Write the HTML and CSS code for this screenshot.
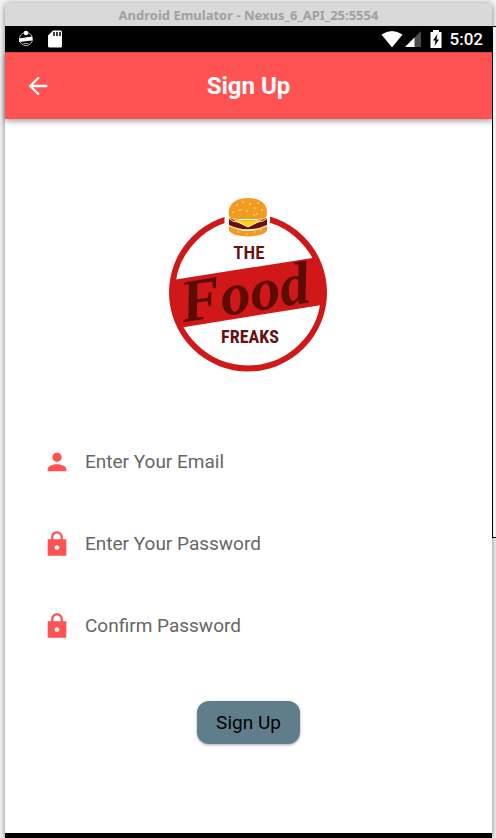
FILE: index.html
```html
<!DOCTYPE html>
<html lang="en">
<head>
<meta charset="utf-8">
<title>Sign Up</title>
<meta name="viewport" content="width=device-width, initial-scale=1">
<link rel="stylesheet" href="styles.css">
</head>
<body>
<div class="desktop">
  <div class="window">
    <div class="titlebar">Android Emulator - Nexus_6_API_25:5554</div>
    <div class="statusbar">
      <svg class="status-icon" width="16" height="18" viewBox="0 0 16 18" aria-hidden="true">
        <circle cx="8" cy="9" r="6.5" fill="none" stroke="#bbb" stroke-width="1"/>
        <path d="M1 8.500l13-2v4l-13 1.500z" fill="#fff"/>
        <circle cx="8" cy="3" r="2.300" fill="#fff"/>
        <path d="M5.500 13.500h5" stroke="#999"/>
      </svg>
      <svg class="status-icon" width="14" height="18" viewBox="0 0 14 18" aria-hidden="true">
        <path d="M5 .5h7.500a1.500 1.500 0 0 1 1.500 1.500v14a1.500 1.500 0 0 1-1.500 1.500h-11A1.500 1.500 0 0 1 0 16V5.500z" fill="#fff"/>
        <path d="M6 2v4M9 2v4M12 2v4" stroke="#000" stroke-width="1.500"/>
      </svg>
      <span class="spacer"></span>
      <svg width="42" height="18" viewBox="0 0 42 18" aria-hidden="true">
        <path d="M.5 4.500Q11 -2.500 21.500 4.500L11 17.500z" fill="#fff"/>
        <path d="M24 17L40 1v16z" fill="#4c4c4c"/>
        <path d="M24 17L33.500 7.500V17z" fill="#fff"/>
      </svg>
      <svg class="battery" width="12" height="18" viewBox="0 0 12 18" aria-hidden="true">
        <path d="M.5 2H3V0h6v2h2.500v16H.5z" fill="#fff"/>
        <path d="M7.500 4L3 10.500h2.500L4.500 16 9 9.500H6.500z" fill="#000"/>
      </svg>
      <span class="clock">5:02</span>
    </div>
    <header class="appbar">
      <button class="back" type="button" aria-label="Back">
        <svg width="28" height="28" viewBox="0 0 24 24" aria-hidden="true"><path d="M20 11H7.830l5.590-5.590L12 4l-8 8 8 8 1.410-1.410L7.830 13H20z" fill="#fff"/></svg>
      </button>
      <h1>Sign Up</h1>
    </header>
    <main>
      <svg class="logo" width="180" height="190" viewBox="0 0 180 190" role="img" aria-label="The Food Freaks">
        <defs><clipPath id="disc"><circle cx="88" cy="102.500" r="77"/></clipPath></defs>
        <path d="M0 91.900L180 63.700V112L0 140.900z" fill="#d01818" clip-path="url(#disc)"/>
        <circle cx="88" cy="102.500" r="76" fill="none" stroke="#d01818" stroke-width="6"/>
        <path d="M64.500 10h45.500v40H64.500z" fill="#fff"/>
        <g class="burger">
          <path d="M69 26C67 14 76 8 88 8s21 6 18.500 18c-1 3-5 3-18.500 3s-18 0-19-3z" fill="#f19b20"/>
          <path d="M69 28q19 5 38 0v8q-19 8-38 0z" fill="#6d1009"/>
          <path d="M70 28q18 5 36 0l-8 4-10 5-11-5z" fill="#ffd319"/>
          <path d="M69 28.500q4 4 9 3.500l10 5 10-5q5 0 9-3.500" fill="none" stroke="#fff3cf"/>
          <path d="M69 36q19 10 38 0v5q-4 5-19 5.500Q73 46 69 41z" fill="#f19b20"/>
          <path d="M69 35.500q19 9 38 0" fill="none" stroke="#fff3cf" stroke-width="1.300"/>
          <g fill="#ffe5ad"><circle cx="77" cy="15" r=".8"/><circle cx="83" cy="12" r=".8"/><circle cx="90" cy="14" r=".8"/><circle cx="98" cy="13" r=".8"/><circle cx="73" cy="22" r=".8"/><circle cx="80" cy="20" r=".8"/><circle cx="87" cy="21" r=".8"/><circle cx="94" cy="25" r=".8"/><circle cx="97" cy="24" r=".8"/><circle cx="102" cy="20" r=".8"/><circle cx="95" cy="18" r=".8"/><circle cx="78" cy="42" r=".7"/><circle cx="87" cy="44" r=".7"/><circle cx="95" cy="42" r=".7"/><circle cx="101" cy="40" r=".7"/></g>
        </g>
        <text class="logo-the" x="89" y="69">THE</text>
        <text class="logo-food" transform="translate(88 122) rotate(-9)">Food</text>
        <text class="logo-freaks" x="90" y="153">FREAKS</text>
      </svg>
      <form class="form">
        <div class="field">
          <svg width="28" height="28" viewBox="0 0 24 24" aria-hidden="true"><path d="M12 12c2.210 0 4-1.790 4-4s-1.790-4-4-4-4 1.790-4 4 1.790 4 4 4zm0 2c-2.670 0-8 1.340-8 4v2h16v-2c0-2.660-5.330-4-8-4z"/></svg>
          <input type="email" aria-label="Email" placeholder="Enter Your Email">
        </div>
        <div class="field">
          <svg width="28" height="28" viewBox="0 0 24 24" aria-hidden="true"><path d="M20 8h-3V6c0-2.760-2.240-5-5-5S7 3.240 7 6v2H4v14h16zM12 17c-1.100 0-2-.9-2-2s.9-2 2-2 2 .9 2 2-.9 2-2 2zM8.900 8V6c0-1.710 1.390-3.100 3.100-3.100s3.100 1.390 3.100 3.100v2z" fill-rule="evenodd"/></svg>
          <input type="password" aria-label="Password" placeholder="Enter Your Password">
        </div>
        <div class="field">
          <svg width="28" height="28" viewBox="0 0 24 24" aria-hidden="true"><path d="M20 8h-3V6c0-2.760-2.240-5-5-5S7 3.240 7 6v2H4v14h16zM12 17c-1.100 0-2-.9-2-2s.9-2 2-2 2 .9 2 2-.9 2-2 2zM8.900 8V6c0-1.710 1.390-3.100 3.100-3.100s3.100 1.390 3.100 3.100v2z" fill-rule="evenodd"/></svg>
          <input type="password" aria-label="Confirm password" placeholder="Confirm Password">
        </div>
        <button class="submit" type="button">Sign Up</button>
      </form>
    </main>
    <div class="navbar"></div>
  </div>
  <div class="toolbar"></div>
</div>
</body>
</html>
```
FILE: styles.css
```css
* { box-sizing: border-box; }

body {
  margin: 0;
  background: #f6f6f6;
  font-family: Roboto, sans-serif;
}

.desktop {
  display: flex;
  min-height: 100vh;
  padding: 3px 0 0 5px;
  overflow: hidden;
}

.window {
  flex: 1;
  display: flex;
  flex-direction: column;
  background: #fff;
  border-radius: 3px 3px 0 0;
  box-shadow: 0 1px 6px rgba(0, 0, 0, 0.5);
}

.titlebar {
  height: 23px;
  background: #d9d9d9;
  border-radius: 3px 3px 0 0;
  color: #a0a0a0;
  font: 700 13px/24px "Noto Sans", sans-serif;
  text-align: center;
}

.statusbar {
  display: flex;
  align-items: center;
  height: 26px;
  padding: 0 9px 0 13px;
  background: #000;
  color: #fff;
}

.status-icon { margin-right: 14px; }
.spacer { flex: 1; }
.battery { margin-left: 7px; }

.clock {
  margin-left: 8px;
  font-size: 17px;
  font-weight: 500;
  line-height: 26px;
}

.appbar {
  display: grid;
  grid-template-columns: 66px 1fr 66px;
  align-items: center;
  height: 67px;
  background: #ff5252;
  border-top: 1px solid #d84545;
  box-shadow: 0 2px 6px rgba(0, 0, 0, 0.4);
  color: #fff;
}

.back {
  display: flex;
  justify-content: center;
  padding: 0;
  border: 0;
  background: none;
}

.appbar h1 {
  margin: 0;
  font-size: 24px;
  font-weight: 700;
  line-height: 28px;
  text-align: center;
}

main {
  flex: 1;
  display: flex;
  flex-direction: column;
  align-items: center;
  padding: 71px 38px 0;
}

.logo { margin-left: 3px; }

.logo text { text-anchor: middle; fill: #67120f; }
.logo .logo-the { font: 600 19px "Roboto Condensed", "Liberation Sans Narrow", Roboto, sans-serif; }
.logo .logo-food { font: italic 700 60px "Liberation Serif", serif; fill: #5c0c02; }
.logo .logo-freaks { font: 700 18px "Roboto Condensed", "Liberation Sans Narrow", Roboto, sans-serif; }

.form {
  display: flex;
  flex-direction: column;
  align-items: center;
  width: 100%;
  padding-top: 54px;
}

.field {
  display: flex;
  align-items: center;
  gap: 14px;
  width: 100%;
  height: 56px;
  margin-bottom: 26px;
}

.field svg { fill: #ff5252; }

.field input {
  flex: 1;
  min-width: 0;
  padding: 0;
  border: 0;
  outline: 0;
  background: none;
  color: #222;
  font: 400 19px/28px Roboto, sans-serif;
}

.field input::placeholder { color: #666; opacity: 1; }

.submit {
  height: 43px;
  margin-top: 21px;
  padding: 0 19px;
  border: 0;
  border-radius: 12px;
  background: #607d8b;
  box-shadow: 0 1px 3px rgba(0, 0, 0, 0.35);
  color: #000;
  font: 400 19px/28px Roboto, sans-serif;
}

.navbar { height: 5px; background: #000; }

.toolbar {
  position: relative;
  width: 4px;
  height: 512px;
  margin-top: 23px;
  background: #f0f0f0;
  border: 1px solid #000;
  border-right: 0;
}
```
